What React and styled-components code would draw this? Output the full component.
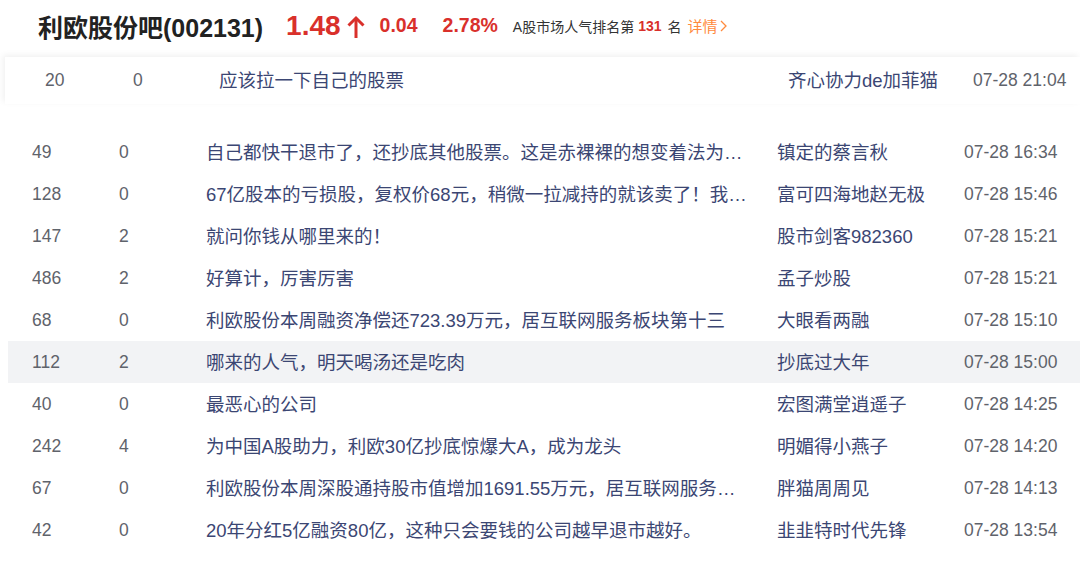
import React from "react";
import styled, { createGlobalStyle } from "styled-components";

const Global = createGlobalStyle`
  html, body { margin: 0; padding: 0; background: #fff; }
  body { font-family: "Liberation Sans", "Noto Sans CJK SC", sans-serif; width: 1080px; height: 568px; overflow: hidden; }
`;

const Page = styled.div`
  width: 1080px;
  height: 568px;
  overflow: hidden;
  background: #fff;
`;

const Header = styled.div`
  height: 56px;
  display: flex;
  align-items: center;
  padding: 0 0 5px 38px;
  box-sizing: border-box;
`;

const StockName = styled.div`
  font-size: 25px;
  font-weight: bold;
  color: #222;
  margin-right: 23px;
`;

const Price = styled.div`
  font-size: 28px;
  font-weight: bold;
  color: #d9302b;
  margin-right: 5px;
`;

const Arrow = styled.svg`
  width: 20px;
  height: 24px;
  margin-right: 14px;
  margin-top: 2px;
`;

const Change = styled.div`
  font-size: 19.5px;
  font-weight: bold;
  color: #d9302b;
  margin-right: ${(p) => p.$gap}px;
`;

const Rank = styled.div`
  font-size: 14px;
  color: #333;
  display: flex;
  align-items: center;
`;

const RankNum = styled.span`
  color: #d9302b;
  font-weight: bold;
  margin: 0 6px 0 4px;
`;

const Detail = styled.a`
  color: #ff8a3d;
  font-size: 15px;
  margin-left: 6px;
  display: inline-flex;
  align-items: center;
  gap: 2px;
  text-decoration: none;
`;

const Sticky = styled.div`
  margin: 1px 0 0 5px;
  height: 47px;
  background: #fff;
  box-shadow: -2px -2px 6px rgba(0, 0, 0, 0.06);
  display: flex;
  align-items: center;
  padding-left: 40px;
  padding-bottom: 1px;
  box-sizing: border-box;
`;

const List = styled.div`
  margin: 27px 0 0 8px;
  display: flex;
  flex-direction: column;
`;

const Row = styled.div`
  height: 42px;
  display: flex;
  align-items: center;
  padding-left: 24px;
  background: ${(p) => (p.$active ? "#f2f3f5" : "transparent")};
`;

const Cell = styled.div`
  flex: none;
  width: ${(p) => p.$w}px;
  font-size: ${(p) => (p.$num ? 17.5 : 18.5)}px;
  color: ${(p) => (p.$link ? "#3b4673" : "#5f636b")};
  white-space: nowrap;
  overflow: hidden;
  margin-top: ${(p) => (p.$num ? 0 : -2)}px;
`;

const TitleCell = styled(Cell)`
  margin-right: ${(p) => p.$mr}px;
`;

const rows = [
  ["49", "0", "自己都快干退市了，还抄底其他股票。这是赤裸裸的想变着法为…", "镇定的蔡言秋", "07-28 16:34"],
  ["128", "0", "67亿股本的亏损股，复权价68元，稍微一拉减持的就该卖了！我…", "富可四海地赵无极", "07-28 15:46"],
  ["147", "2", "就问你钱从哪里来的！", "股市剑客982360", "07-28 15:21"],
  ["486", "2", "好算计，厉害厉害", "孟子炒股", "07-28 15:21"],
  ["68", "0", "利欧股份本周融资净偿还723.39万元，居互联网服务板块第十三", "大眼看两融", "07-28 15:10"],
  ["112", "2", "哪来的人气，明天喝汤还是吃肉", "抄底过大年", "07-28 15:00", true],
  ["40", "0", "最恶心的公司", "宏图满堂逍遥子", "07-28 14:25"],
  ["242", "4", "为中国A股助力，利欧30亿抄底惊爆大A，成为龙头", "明媚得小燕子", "07-28 14:20"],
  ["67", "0", "利欧股份本周深股通持股市值增加1691.55万元，居互联网服务…", "胖猫周周见", "07-28 14:13"],
  ["42", "0", "20年分红5亿融资80亿，这种只会要钱的公司越早退市越好。", "韭韭特时代先锋", "07-28 13:54"],
];

export default function App() {
  return (
    <Page>
      <Global />
      <Header>
        <StockName>利欧股份吧(002131)</StockName>
        <Price>1.48</Price>
        <Arrow viewBox="0 0 20 24">
          <path d="M10 3 V23" stroke="#d9302b" strokeWidth="3" fill="none" />
          <path d="M2.5 10.5 L10 3 L17.5 10.5" stroke="#d9302b" strokeWidth="3" fill="none" strokeLinejoin="miter" />
        </Arrow>
        <Change $gap={25}>0.04</Change>
        <Change $gap={15}>2.78%</Change>
        <Rank>
          A股市场人气排名第<RankNum>131</RankNum>名
          <Detail>
            详情
            <svg width="7" height="12" viewBox="0 0 7 12">
              <path d="M1 1 L6 6 L1 11" stroke="#ff8a3d" strokeWidth="1.3" fill="none" />
            </svg>
          </Detail>
        </Rank>
      </Header>
      <Sticky>
        <Cell $num $w={88}>20</Cell>
        <Cell $num $w={86}>0</Cell>
        <TitleCell $link $w={545} $mr={24}>应该拉一下自己的股票</TitleCell>
        <Cell $link $w={185}>齐心协力de加菲猫</Cell>
        <Cell $num $w={110}>07-28 21:04</Cell>
      </Sticky>
      <List>
        {rows.map((r, i) => (
          <Row key={i} $active={r[5]}>
            <Cell $num $w={87}>{r[0]}</Cell>
            <Cell $num $w={87}>{r[1]}</Cell>
            <TitleCell $link $w={560} $mr={11}>{r[2]}</TitleCell>
            <Cell $link $w={187}>{r[3]}</Cell>
            <Cell $num $w={110}>{r[4]}</Cell>
          </Row>
        ))}
      </List>
    </Page>
  );
}
